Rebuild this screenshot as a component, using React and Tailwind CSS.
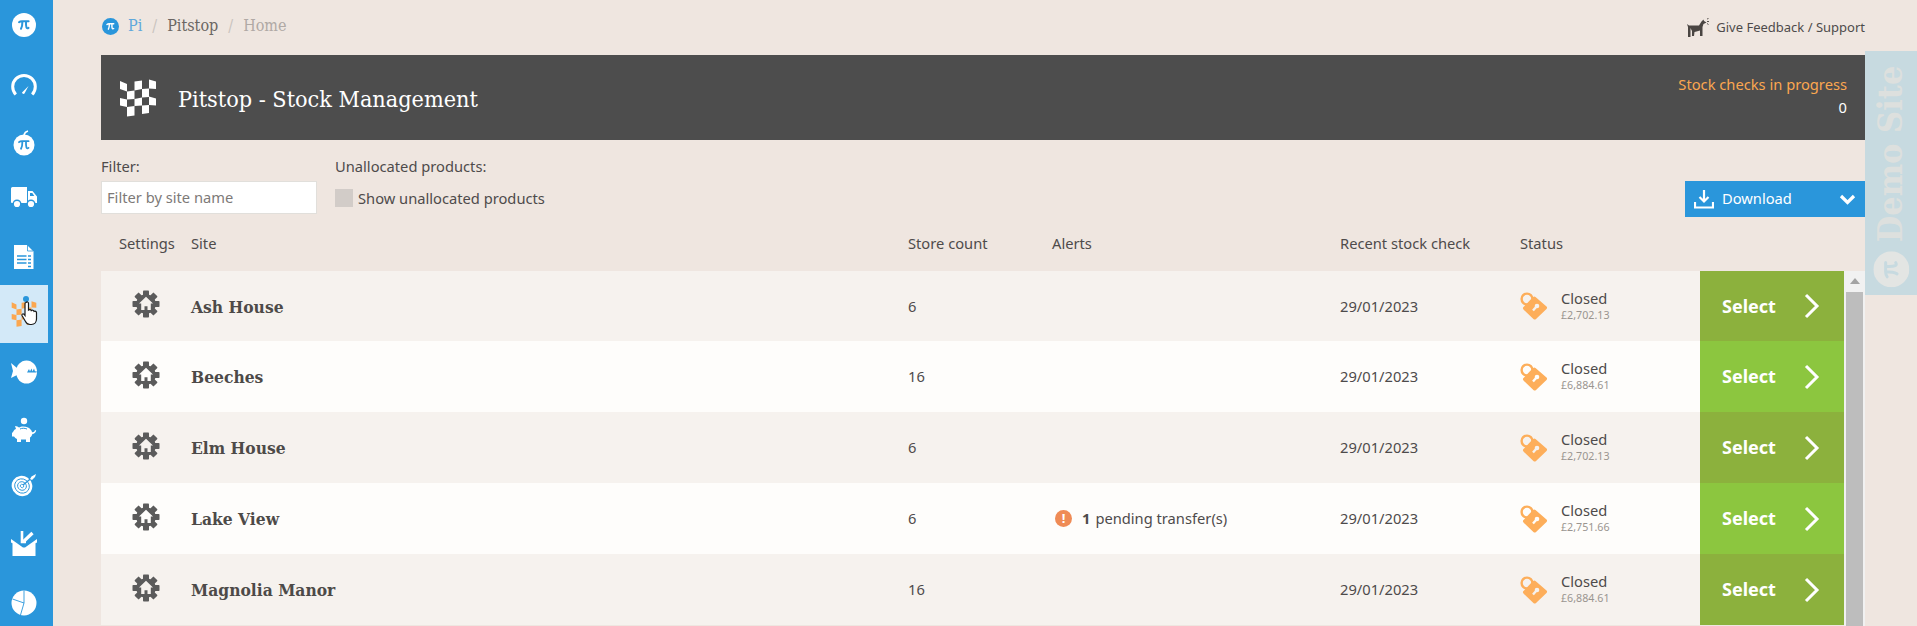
import React from "react";

const sites = [
    { name: "Ash House", count: 6, value: "£2,702.13" },
    { name: "Beeches", count: 16, value: "£6,884.61" },
    { name: "Elm House", count: 6, value: "£2,702.13" },
    { name: "Lake View", count: 6, value: "£2,751.66", pending: 1 },
    { name: "Magnolia Manor", count: 16, value: "£6,884.61" },
];

const slab = "font-['DejaVu_Serif_Condensed','DejaVu_Serif',serif]";
const BLUE = "#2a96db";

function PiGlyph({ color, sw = 2 }) {
    return (
        <path
            d="M7 9.200c1-.9 2-1 3-1h6.600M10.400 8.400c0 3-.4 5.600-1.400 7.400M14 8.400c-.1 2.700 0 5.100.5 6.300.3.700 1.200.8 2 .2"
            fill="none"
            stroke={color}
            strokeWidth={sw}
            strokeLinecap="round"
        />
    );
}

function PiCircle({ bg, fg, size }) {
    return (
        <svg width={size} height={size} viewBox="0 0 24 24">
            <circle cx="12" cy="12" r="12" fill={bg} />
            <PiGlyph color={fg} />
        </svg>
    );
}

function Checker({ color, size }) {
    const polys = [
        "14,15 21,18 21,25.500 14,23",
        "28.500,15.500 36,14.500 36,23 28.500,24.500",
        "43,13.500 50,15.500 50,23 43,22.500",
        "21,25.500 28.500,24.500 28.500,33 21,33.500",
        "36,23 43,22.500 43,31 36,31.500",
        "14,32 21,33.500 21,41 14,39.500",
        "28.500,33 36,31.500 36,39.500 28.500,40",
        "43,30.500 50,32.500 50,39.500 43,39",
        "21,41 28.500,40 28.500,49.500 21,50.500",
        "36,39.500 43,39 43,47 36,48",
    ];
    return (
        <svg width={size} height={size} viewBox="13 13 38 38">
            {polys.map((p) => (
                <polygon key={p} points={p} fill={color} />
            ))}
        </svg>
    );
}

function GearHouse({ hole }) {
    const teeth = [0, 45, 90, 135, 180, 225, 270, 315];
    return (
        <svg width="28" height="28" viewBox="0 0 28 28">
            {teeth.map((a) => (
                <rect key={a} x="11" y="0.500" width="6" height="6" rx="0.800" fill="#5b5b5b" transform={`rotate(${a} 14 14)`} />
            ))}
            <circle cx="14" cy="14" r="9.800" fill="#5b5b5b" />
            <path d="M14 6.800l7 6.700h-2.200V20h-3.300v-3.800h-3V20H9.200v-6.500H7z" fill={hole} />
        </svg>
    );
}

function LockIcon({ hole }) {
    return (
        <svg width="28" height="28" viewBox="0 0 28 28">
            <circle cx="7" cy="7" r="5.400" fill="none" stroke="#fdae5a" strokeWidth="2.400" />
            <path d="M15.500 5l11 9.500q1.200 1.200 0 2.400L16 27q-1.300 1.200-2.600 0L3.500 17.500q-1.200-1.200 0-2.400L13 5q1.200-1.200 2.500 0z" fill="#fdae5a" />
            <circle cx="17" cy="14" r="2.300" fill={hole} />
            <path d="M16.500 14.500l-3.500 4" stroke={hole} strokeWidth="2.400" />
        </svg>
    );
}

function NavIcon({ name }) {
    const w = "#ffffff";
    if (name === "pi") return <PiCircle bg={w} fg={BLUE} size={24} />;
    if (name === "gauge")
        return (
            <svg width="26" height="24" viewBox="0 0 26 24">
                <path d="M4.800 21.500a11.300 11.300 0 1 1 16.400 0" fill="none" stroke={w} strokeWidth="3" />
                <path d="M11 19.500l6.500-6.500-4 7.500a1.500 1.500 0 0 1-2.500-1z" fill={w} />
            </svg>
        );
    if (name === "apple")
        return (
            <svg width="24" height="26" viewBox="0 0 24 26">
                <circle cx="12" cy="15" r="10.500" fill={w} />
                <path d="M12 5c.5-2 2-3.500 4-4" fill="none" stroke={w} strokeWidth="1.600" />
                <g transform="translate(0 3)"><PiGlyph color={BLUE} sw="1.800" /></g>
            </svg>
        );
    if (name === "truck")
        return (
            <svg width="26" height="22" viewBox="0 0 26 22">
                <path d="M1.500 0h14.500v16H1a1 1 0 0 1-1-1V1.500A1.500 1.500 0 0 1 1.500 0zM17 4h4.500l4.500 5.500V16H17z" fill={w} />
                <path d="M19 6h2.300l2 3H19z" fill={BLUE} />
                <circle cx="6" cy="17" r="3.800" fill={w} stroke={BLUE} strokeWidth="1.400" />
                <circle cx="20" cy="17" r="3.800" fill={w} stroke={BLUE} strokeWidth="1.400" />
            </svg>
        );
    if (name === "doc")
        return (
            <svg width="20" height="24" viewBox="0 0 20 24">
                <path d="M0 0h13l6.500 6.500V24H0z" fill={w} />
                <path d="M13.500 0v6h6" fill="none" stroke={BLUE} strokeWidth="0.800" />
                <path d="M3 11h9.500M14 11h3M3 14.500h9.500M14 14.500h3M3 18h9.500M14 18h3M14 21.500h3" stroke={BLUE} strokeWidth="1.500" />
            </svg>
        );
    if (name === "flag")
        return (
            <div className="relative w-[26px] h-[26px]">
                <Checker color="#fba750" size={26} />
                <span className="absolute left-[12px] -top-[5px] w-[6px] h-[6px] rounded-full bg-[#2a96db]" />
                <svg className="absolute left-[9px] top-0" width="20" height="25" viewBox="0 0 20 25">
                    <path
                        d="M6 1.500c1-1 2.500-.5 2.500 1V9c1-.8 2.500-.5 2.800.6.900-.8 2.400-.4 2.700.8 1-.6 2.500 0 2.500 1.400V18c0 3-2 5.500-5 5.500H10c-2 0-3.500-1-4.500-3L2 14.500c-.5-1 .8-2.300 2-1.300l1 1.300V2.500c0-.4.300-.8 1-1z"
                        fill="#fff"
                        stroke="#1a1a1a"
                        strokeWidth="1.200"
                    />
                </svg>
            </div>
        );
    if (name === "fish")
        return (
            <svg width="26" height="24" viewBox="0 0 26 24">
                <ellipse cx="15.500" cy="12" rx="10.500" ry="11.500" fill={w} />
                <path d="M0 3l6 5v7l-6 3 2-7z" fill={w} />
                <path d="M16 12.500l2-3.500 1 2.500 1.500-3 1 3 1.500-3 1 3 1.500-.5v1.500z" fill={BLUE} />
            </svg>
        );
    if (name === "piggy")
        return (
            <svg width="26" height="26" viewBox="0 0 26 26">
                <circle cx="13" cy="4" r="3.200" fill={w} />
                <path d="M1 16l1-1c1-2 2-3 3-3l-1-3c2 0 3 1 4 1.500C10 9 14 9 17 10.500c2 1 3.500 2.500 4 4.500 1 .5 2.500 0 3-2l1.200.5c-.5 2-2 3.500-3.800 3.500-.5 2-1.500 3-2.400 3.500V25h-4v-2.500H10V25H6v-3c-1.500-.5-2-1.500-3-2.500H1z" fill={w} />
                <path d="M9 12c2-1 4.500-1 7 0" fill="none" stroke={BLUE} strokeWidth="1" />
            </svg>
        );
    if (name === "target")
        return (
            <svg width="26" height="24" viewBox="0 0 26 24">
                <g transform="rotate(35 11 13)">
                    <ellipse cx="11" cy="13" rx="10.500" ry="10" fill={w} />
                    <ellipse cx="11" cy="13" rx="7.500" ry="7" fill="none" stroke={BLUE} strokeWidth="0.900" />
                    <ellipse cx="11" cy="13" rx="4.500" ry="4.200" fill="none" stroke={BLUE} strokeWidth="0.900" />
                    <ellipse cx="11" cy="13" rx="1.800" ry="1.600" fill="none" stroke={BLUE} strokeWidth="0.800" />
                </g>
                <path d="M12 12L23 3" stroke={BLUE} strokeWidth="1.400" />
                <path d="M19 6l1.500-2.500L25 1l-1 3-3 3z" fill={w} />
            </svg>
        );
    if (name === "box")
        return (
            <svg width="26" height="25" viewBox="0 0 26 25">
                <path d="M0 8l12 8.500h2L26 8v3.500l-1.500.8V25h-23V12.300L0 11.500z" fill={w} />
                <path d="M11 0v11h4" fill="none" stroke={w} strokeWidth="2.600" />
                <path d="M12 11L21.500 2" stroke={w} strokeWidth="3.200" />
            </svg>
        );
    return (
        <svg width="26" height="26" viewBox="0 0 26 26">
            <circle cx="13" cy="13" r="12.500" fill={w} />
            <path d="M13 .5V13L1.500 9M13 13l-3.500 12" fill="none" stroke={BLUE} strokeWidth="0.900" />
        </svg>
    );
}

function Sidebar() {
    const items = [
        { name: "pi", shift: "translate-y-[1px]" },
        { name: "gauge", shift: "translate-y-[3px]" },
        { name: "apple", shift: "translate-y-[3px]" },
        { name: "truck", shift: "" },
        { name: "doc", shift: "translate-y-[1px]" },
        { name: "flag", shift: "" },
        { name: "fish", shift: "" },
        { name: "piggy", shift: "" },
        { name: "target", shift: "-translate-y-[3px]" },
        { name: "box", shift: "-translate-y-[3px]" },
        { name: "pie", shift: "-translate-y-[1px]" },
    ];
    return (
        <nav className="w-[53px] shrink-0 bg-[#2a96db] -mt-[5px]">
            {items.map(({ name, shift }) => (
                <div
                    key={name}
                    className={
                        name === "flag"
                            ? "w-[48px] h-[58px] bg-[#d3e9f8] flex items-center justify-center"
                            : "w-[48px] h-[58px] flex items-center justify-center"
                    }
                >
                    <div className={shift}>
                        <NavIcon name={name} />
                    </div>
                </div>
            ))}
        </nav>
    );
}

function DemoTab() {
    return (
        <div className="absolute right-0 top-[51px] w-[52px] h-[244px] bg-[#c7dae0] flex items-center justify-center overflow-hidden">
            <div className={`-rotate-90 flex items-center gap-[9px] whitespace-nowrap text-[#dde0de] text-[34px] font-bold translate-y-[3px] ${slab}`}>
                <PiCircle bg="#e3e5e3" fg="#c7dae0" size={36} />
                <span>Demo Site</span>
            </div>
        </div>
    );
}

function SiteRow({ site, index }) {
    const odd = index % 2 === 0;
    const rowBg = odd ? "#f6f2ee" : "#fefdfb";
    return (
        <div
            className={`grid grid-cols-[90px_717px_144px_288px_180px_180px_144px] items-center ${index === 0 ? "h-[70px]" : "h-[71px]"} ${odd ? "bg-[#f6f2ee]" : "bg-[#fefdfb]"}`}
        >
            <div className="pl-[31px] -mt-[4px]">
                <GearHouse hole={rowBg} />
            </div>
            <div className={`text-[17.3px] font-bold text-[#4d4a48] pt-[3px] ${slab}`}>{site.name}</div>
            <div>{site.count}</div>
            <div className="flex items-center">
                {site.pending && (
                    <>
                        <span className="ml-[3px] mr-[10px] w-[17px] h-[17px] rounded-full bg-[#ef8b55] text-white text-[13px] font-bold leading-[17px] text-center">
                            !
                        </span>
                        <span className="font-bold mr-[5px]">{site.pending}</span>
                        <span>pending transfer(s)</span>
                    </>
                )}
            </div>
            <div>29/01/2023</div>
            <div className="flex items-center gap-[13px]">
                <LockIcon hole={rowBg} />
                <div className="-mt-[3px]">
                    <div className="leading-[20px]">Closed</div>
                    <div className="text-[10.7px] leading-[14px] text-[#9a9590]">{site.value}</div>
                </div>
            </div>
            <div className={`h-full flex items-center pl-[22px] gap-[29px] text-white ${odd ? "bg-[#8cb13d]" : "bg-[#8cc63f]"}`}>
                <span className="text-[18px] font-bold w-[53px]">Select</span>
                <svg width="16" height="26" viewBox="0 0 16 26">
                    <path d="M2 2l11 11L2 24" fill="none" stroke="#fff" strokeWidth="3" />
                </svg>
            </div>
        </div>
    );
}

export default function App() {
    return (
        <div className="relative flex h-screen overflow-hidden bg-[#efe6e0] text-[14.7px] text-[#4e4b4b] font-['Noto_Sans',sans-serif]">
            <Sidebar />
            <main className="flex-1 min-w-0 pl-[48px] pr-[52px]">
                <div className="h-[55px] flex items-center justify-between pb-[3px]">
                    <div className={`flex items-center text-[16px] pl-[1px] ${slab}`}>
                        <PiCircle bg={BLUE} fg="#ffffff" size={17} />
                        <span className="ml-[9px] text-[#5fa8dc]">Pi</span>
                        <span className="mx-[10px] text-[#c9c3be]">/</span>
                        <span className="text-[#6b6663]">Pitstop</span>
                        <span className="mx-[10px] text-[#c9c3be]">/</span>
                        <span className="text-[#b0a9a5]">Home</span>
                    </div>
                    <div className="flex items-center gap-[7px] text-[13px] pt-[3px]">
                        <svg width="22" height="19" viewBox="0 0 22 19">
                            <path d="M0 6l2 1.500h10l2.500-4 2-2 .5 1.500 2.500 1.500-3 1.500-1 3v9h-2.500v-5.500l-3.500 1-2 .5-.5 4H5v-5L3.500 10 3.500 19H1V9z" fill="#4a4542" />
                            <path d="M20 1l1.500-.5M20 3.500h2M20 5.500l1.500 1" stroke="#4a4542" strokeWidth="0.900" />
                        </svg>
                        <span>Give Feedback / Support</span>
                    </div>
                </div>

                <header className="h-[85px] bg-[#4d4d4d] flex items-center pl-[18px] pr-[18px]">
                    <Checker color="#ffffff" size={38} />
                    <h1 className={`ml-[21px] pt-[3px] text-[23.200px] text-white ${slab}`}>Pitstop - Stock Management</h1>
                    <div className="ml-auto text-right leading-[23px] -mt-[3px]">
                        <div className="text-[#fba750]">Stock checks in progress</div>
                        <div className="text-white">0</div>
                    </div>
                </header>

                <div className="h-[77px] flex items-start pt-[16px]">
                    <div className="w-[234px]">
                        <div className="leading-[20px]">Filter:</div>
                        <input
                            placeholder="Filter by site name"
                            className="mt-[5px] w-[216px] h-[33px] px-[5px] pb-[2px] bg-white border border-[#e1dfdb] outline-none text-[14.7px] placeholder:text-[#7d7a78]"
                        />
                    </div>
                    <div>
                        <div className="leading-[20px]">Unallocated products:</div>
                        <label className="mt-[11px] flex items-center gap-[5px]">
                            <span className="w-[18px] h-[18px] bg-[#d2ccc8]" />
                            <span>Show unallocated products</span>
                        </label>
                    </div>
                    <button className="ml-auto mt-[25px] w-[180px] h-[36px] bg-[#2a96db] text-white flex items-center pl-[9px] pr-[9px]">
                        <svg width="20" height="20" viewBox="0 0 20 20">
                            <path d="M10 1v11M5.500 8l4.500 4.500L14.500 8M1 13v5.500h18V13" fill="none" stroke="#fff" strokeWidth="2.200" />
                        </svg>
                        <span className="ml-[8px] -mt-[2px]">Download</span>
                        <svg className="ml-auto" width="17" height="11" viewBox="0 0 17 11">
                            <path d="M2 2l6.500 6.500L15 2" fill="none" stroke="#fff" strokeWidth="3.200" />
                        </svg>
                    </button>
                </div>

                <div className="h-[54px] grid grid-cols-[90px_717px_144px_288px_180px_180px_144px] items-center pb-[2px]">
                    <div className="pl-[18px]">Settings</div>
                    <div>Site</div>
                    <div>Store count</div>
                    <div>Alerts</div>
                    <div>Recent stock check</div>
                    <div>Status</div>
                </div>

                <div className="flex">
                    <div className="w-[1743px] shrink-0">
                        {sites.map((site, i) => (
                            <SiteRow key={site.name} site={site} index={i} />
                        ))}
                    </div>
                    <div className="w-[21px] bg-[#f1f1f1] flex flex-col items-center">
                        <svg className="mt-[7px]" width="10" height="6" viewBox="0 0 10 6">
                            <path d="M0 6l5-6 5 6z" fill="#a3a3a3" />
                        </svg>
                        <div className="mt-[8px] w-[17px] h-[340px] bg-[#bdbdbd]" />
                    </div>
                </div>
            </main>
            <DemoTab />
        </div>
    );
}
